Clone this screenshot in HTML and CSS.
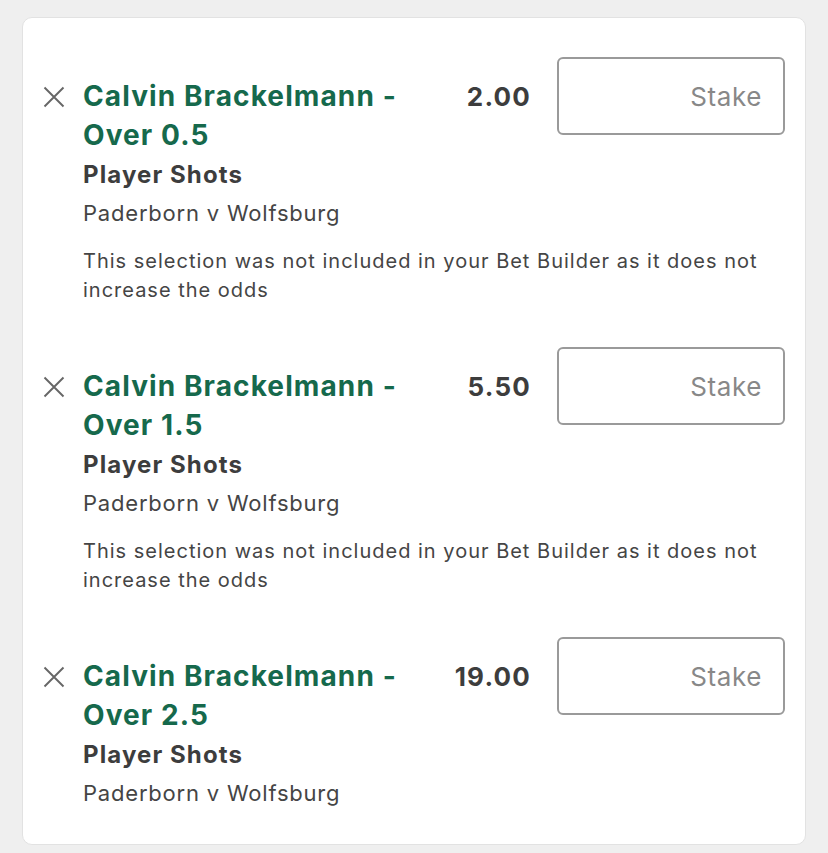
FILE: index.html
```html
<!DOCTYPE html>
<html lang="en">
<head>
<meta charset="utf-8">
<title>Bet slip</title>
<link rel="stylesheet" href="styles.css">
</head>
<body>
<div class="card">
  <div class="bet">
    <button class="close" aria-label="Remove"><svg viewBox="0 0 24 24" width="24" height="24"><path d="M2.5 2.5 L21.5 21.5 M21.5 2.5 L2.5 21.5" stroke="#666" stroke-width="1.9" fill="none"/></svg></button>
    <div class="info">
      <div class="title">Calvin Brackelmann - Over 0.5</div>
      <div class="market">Player Shots</div>
      <div class="event">Paderborn v Wolfsburg</div>
    </div>
    <div class="odds">2.00</div>
    <div class="stake">Stake</div>
    <div class="note">This selection was not included in your Bet Builder as it does not increase the odds</div>
  </div>
  <div class="bet">
    <button class="close" aria-label="Remove"><svg viewBox="0 0 24 24" width="24" height="24"><path d="M2.5 2.5 L21.5 21.5 M21.5 2.5 L2.5 21.5" stroke="#666" stroke-width="1.9" fill="none"/></svg></button>
    <div class="info">
      <div class="title">Calvin Brackelmann - Over 1.5</div>
      <div class="market">Player Shots</div>
      <div class="event">Paderborn v Wolfsburg</div>
    </div>
    <div class="odds">5.50</div>
    <div class="stake">Stake</div>
    <div class="note">This selection was not included in your Bet Builder as it does not increase the odds</div>
  </div>
  <div class="bet">
    <button class="close" aria-label="Remove"><svg viewBox="0 0 24 24" width="24" height="24"><path d="M2.5 2.5 L21.5 21.5 M21.5 2.5 L2.5 21.5" stroke="#666" stroke-width="1.9" fill="none"/></svg></button>
    <div class="info">
      <div class="title">Calvin Brackelmann - Over 2.5</div>
      <div class="market">Player Shots</div>
      <div class="event">Paderborn v Wolfsburg</div>
    </div>
    <div class="odds">19.00</div>
    <div class="stake">Stake</div>
  </div>
</div>
</body>
</html>
```
FILE: styles.css
```css
html, body {
  background: #efefef;
}
body {
  margin: 17px 22px 8px 22px;
  font-family: Inter, "Noto Sans", sans-serif;
  color: #3d3d3d;
}
.card {
  background: #fff;
  border: 1px solid #e2e2e2;
  border-radius: 10px;
  padding: 39px 20px 32px 19px;
  display: flex;
  flex-direction: column;
  gap: 42px;
}
.bet {
  display: grid;
  grid-template-columns: 24px 1fr auto 228px;
  column-gap: 17px;
  align-items: start;
}
.close {
  border: 0;
  background: none;
  padding: 0;
  margin-top: 28px;
  width: 24px;
  height: 24px;
  display: block;
}
.close svg { display: block; }
.info {
  padding-top: 20px;
  max-width: 340px;
}
.title {
  font-size: 28px;
  font-weight: 700;
  color: #16694c;
  line-height: 39px;
  letter-spacing: 1.1px;
}
.market {
  font-size: 24px;
  font-weight: 700;
  color: #3d3d3d;
  line-height: 39px;
  letter-spacing: 1.1px;
}
.event {
  font-size: 22px;
  color: #454545;
  line-height: 38px;
  letter-spacing: 0.8px;
}
.odds {
  padding-top: 20px;
  font-size: 26px;
  font-weight: 700;
  line-height: 39px;
  color: #3d3d3d;
  margin-right: 9px;
  letter-spacing: 1.2px;
}
.stake {
  box-sizing: border-box;
  height: 78px;
  border: 2px solid #9a9a9a;
  border-radius: 6px;
  display: flex;
  align-items: center;
  justify-content: flex-end;
  padding-right: 21px;
  font-size: 26px;
  color: #888;
  letter-spacing: 0.6px;
}
.note {
  grid-column: 2 / 5;
  font-size: 20px;
  line-height: 29px;
  color: #454545;
  margin-top: 15px;
  padding-right: 20px;
  letter-spacing: 1px;
}
```
